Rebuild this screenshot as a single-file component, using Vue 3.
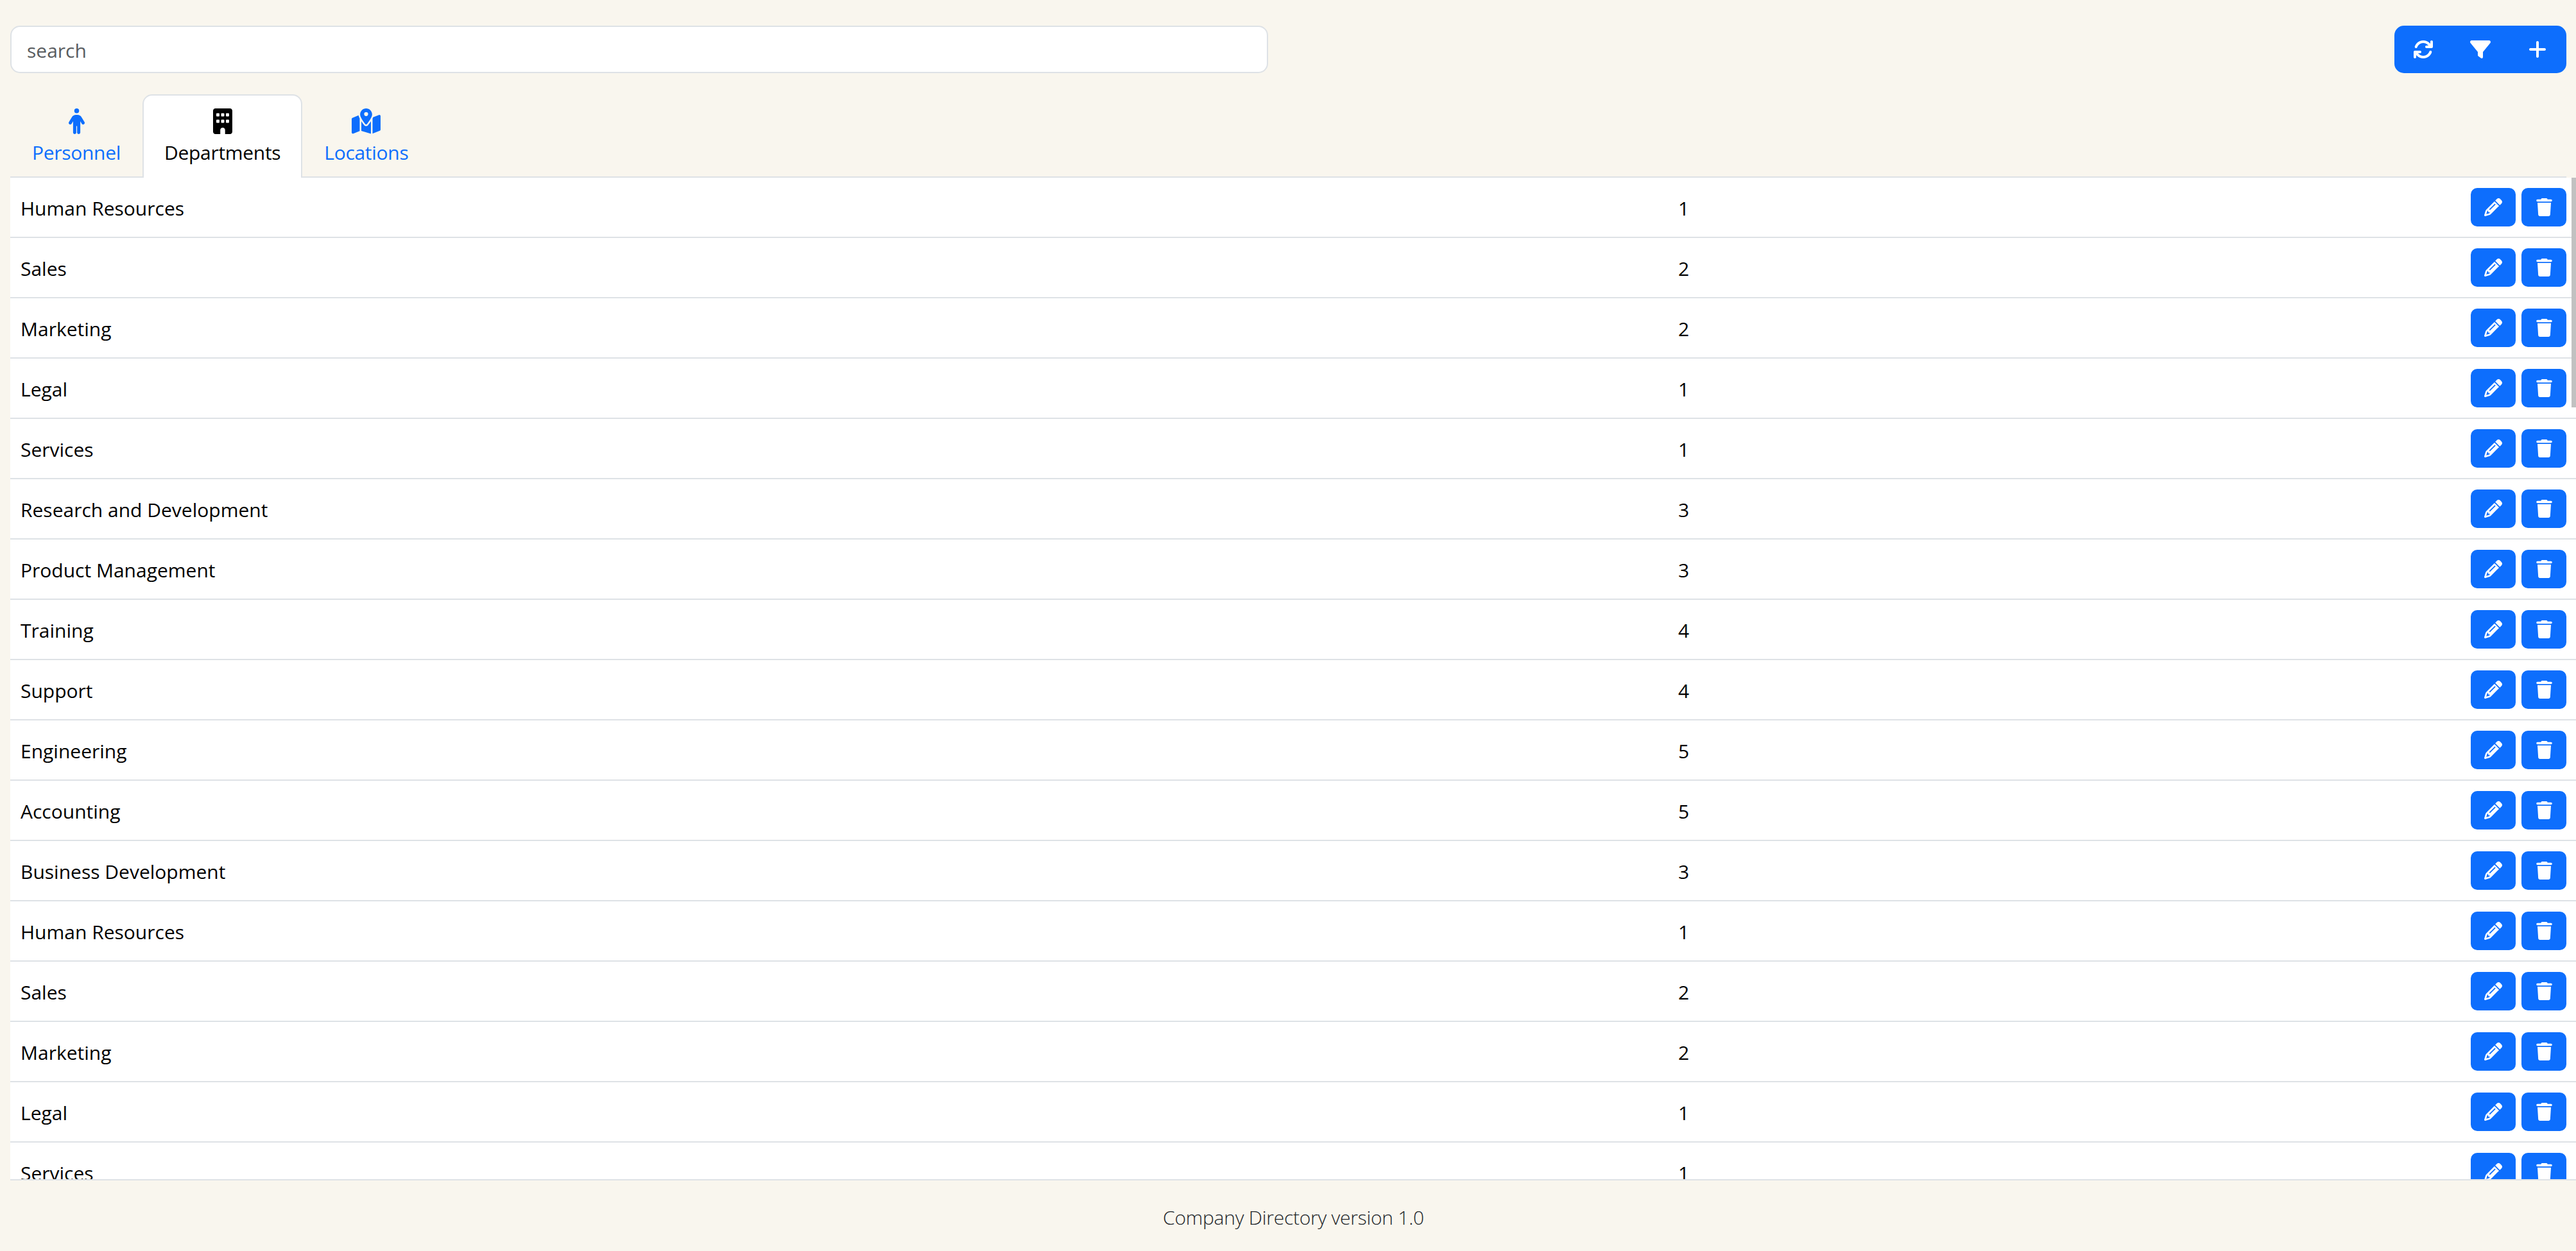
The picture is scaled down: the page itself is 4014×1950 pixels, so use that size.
<script setup>
const rows = [
  ['Human Resources', 1], ['Sales', 2], ['Marketing', 2], ['Legal', 1], ['Services', 1],
  ['Research and Development', 3], ['Product Management', 3], ['Training', 4], ['Support', 4],
  ['Engineering', 5], ['Accounting', 5], ['Business Development', 3],
  ['Human Resources', 1], ['Sales', 2], ['Marketing', 2], ['Legal', 1], ['Services', 1]
]
</script>

<template>
  <div class="page">
    <header class="top">
      <input class="search" type="text" placeholder="search" />
      <div class="group">
        <button class="gbtn" aria-label="Refresh">
          <svg class="gi" viewBox="0 0 512 512"><path d="M105.1 202.6c7.7-21.8 20.2-42.3 37.8-59.8c62.5-62.5 163.8-62.5 226.3 0L386.3 160H336c-17.7 0-32 14.3-32 32s14.3 32 32 32H463.5c0 0 0 0 0 0h.4c17.7 0 32-14.3 32-32V64c0-17.7-14.3-32-32-32s-32 14.3-32 32v51.2L414.4 97.6c-87.5-87.5-229.3-87.5-316.8 0C73.2 122 55.6 150.7 44.8 181.4c-5.9 16.7 2.9 34.9 19.5 40.8s34.9-2.9 40.8-19.5zM39 289.3c-5 1.5-9.8 4.2-13.7 8.2c-4 4-6.7 8.8-8.1 14c-.3 1.2-.6 2.5-.8 3.8c-.3 1.7-.4 3.4-.4 5.1V448c0 17.7 14.3 32 32 32s32-14.3 32-32V396.9l17.6 17.5 0 0c87.5 87.4 229.3 87.4 316.7 0c24.4-24.4 42.1-53.1 52.9-83.7c5.9-16.7-2.9-34.9-19.5-40.8s-34.9 2.9-40.8 19.5c-7.7 21.8-20.2 42.3-37.8 59.8c-62.5 62.5-163.8 62.5-226.3 0l-.1-.1L125.6 352H176c17.7 0 32-14.3 32-32s-14.3-32-32-32H48.4c-1.6 0-3.2 .1-4.8 .3s-3.1 .5-4.6 1z"/></svg>
        </button>
        <button class="gbtn" aria-label="Filter">
          <svg class="gi" viewBox="0 0 512 512"><path d="M3.9 54.9C10.5 40.9 24.5 32 40 32H472c15.5 0 29.5 8.9 36.1 22.9s4.6 30.5-5.2 42.5L320 320.9V448c0 12.1-6.8 23.2-17.7 28.6s-23.8 4.3-33.5-3l-64-48c-8.1-6-12.8-15.5-12.8-25.6V320.9L9 97.3C-.7 85.4-2.8 68.8 3.9 54.9z"/></svg>
        </button>
        <button class="gbtn" aria-label="Add">
          <svg class="gi plus" viewBox="0 0 448 512"><path d="M256 80c0-17.7-14.3-32-32-32s-32 14.3-32 32V224H48c-17.7 0-32 14.3-32 32s14.3 32 32 32H192V432c0 17.7 14.3 32 32 32s32-14.3 32-32V288H400c17.7 0 32-14.3 32-32s-14.3-32-32-32H256V80z"/></svg>
        </button>
      </div>
    </header>

    <nav class="tabs">
      <a class="tab">
        <svg class="ti person" viewBox="0 0 320 512"><path d="M112 48a48 48 0 1 1 96 0 48 48 0 1 1 -96 0zm40 304V480c0 17.7-14.3 32-32 32s-32-14.3-32-32V256.9L59.4 304.5c-9.1 15.1-28.8 20-43.9 10.9s-20-28.8-10.9-43.9l58.3-97c17.4-28.9 48.6-46.6 82.3-46.6h29.7c33.7 0 64.9 17.7 82.3 46.6l58.3 97c9.1 15.1 4.2 34.8-10.9 43.9s-34.8 4.2-43.9-10.9L232 256.9V480c0 17.7-14.3 32-32 32s-32-14.3-32-32V352H152z"/></svg>
        <span>Personnel</span>
      </a>
      <a class="tab active">
        <svg class="ti building" viewBox="0 0 384 512"><path d="M48 0C21.5 0 0 21.5 0 48V464c0 26.5 21.5 48 48 48h96V432c0-26.5 21.5-48 48-48s48 21.5 48 48v80h96c26.5 0 48-21.5 48-48V48c0-26.5-21.5-48-48-48H48zM64 240c0-8.8 7.2-16 16-16h32c8.8 0 16 7.2 16 16v32c0 8.8-7.2 16-16 16H80c-8.8 0-16-7.2-16-16V240zm112-16h32c8.8 0 16 7.2 16 16v32c0 8.8-7.2 16-16 16H176c-8.8 0-16-7.2-16-16V240c0-8.8 7.2-16 16-16zm80 16c0-8.8 7.2-16 16-16h32c8.8 0 16 7.2 16 16v32c0 8.8-7.2 16-16 16H272c-8.8 0-16-7.2-16-16V240zM80 96h32c8.8 0 16 7.2 16 16v32c0 8.8-7.2 16-16 16H80c-8.8 0-16-7.2-16-16V112c0-8.8 7.2-16 16-16zm80 16c0-8.8 7.2-16 16-16h32c8.8 0 16 7.2 16 16v32c0 8.8-7.2 16-16 16H176c-8.8 0-16-7.2-16-16V112zM272 96h32c8.8 0 16 7.2 16 16v32c0 8.8-7.2 16-16 16H272c-8.8 0-16-7.2-16-16V112c0-8.8 7.2-16 16-16z"/></svg>
        <span>Departments</span>
      </a>
      <a class="tab">
        <svg class="ti map" viewBox="0 0 576 512"><path d="M408 120c0 54.6-73.1 151.9-105.2 192c-7.7 9.6-22 9.6-29.6 0C241.1 271.9 168 174.6 168 120C168 53.7 221.7 0 288 0s120 53.7 120 120zm8 80.4c3.5-6.9 6.7-13.8 9.6-20.6c.5-1.2 1-2.5 1.5-3.7l116-46.4C558.9 123.4 576 135 576 152V422.8c0 9.8-6 18.6-15.1 22.3L416 503V200.4zM137.6 138.3c2.4 14.1 7.2 28.3 12.8 41.5c2.9 6.8 6.1 13.7 9.6 20.6V451.8L32.9 502.7C17.1 509 0 497.4 0 480.4V209.6c0-9.8 6-18.6 15.1-22.3l122.6-49zM327.8 332c13.9-17.4 35.7-45.7 56.2-77V504.3L192 449.4V255c20.5 31.3 42.3 59.6 56.2 77c20.5 25.6 59.1 25.6 79.6 0zM288 152a40 40 0 1 0 0-80 40 40 0 1 0 0 80z"/></svg>
        <span>Locations</span>
      </a>
    </nav>

    <main class="panel">
      <div class="list">
        <div v-for="(row, i) in rows" :key="i" class="row">
          <div class="name">{{ row[0] }}</div>
          <div class="num">{{ row[1] }}</div>
          <div class="actions">
            <button class="abtn" aria-label="Edit">
              <svg class="pen" viewBox="0 0 512 512"><path d="M410.3 231l11.3-11.3-33.9-33.9-62.1-62.1L291.7 89.8l-11.3 11.3-22.6 22.6L58.6 322.9c-10.4 10.4-18 23.3-22.2 37.4L1 480.7c-2.5 8.4-.2 17.5 6.1 23.7s15.3 8.5 23.7 6.1l120.3-35.4c14.1-4.2 27-11.8 37.4-22.2L387.7 253.7 410.3 231zM160 399.4l-9.1 22.7c-4 3.1-8.5 5.4-13.3 6.9L59.4 452l23-78.1c1.4-4.9 3.8-9.4 6.9-13.3l22.7-9.1v32c0 8.8 7.2 16 16 16h32zM362.7 18.7L348.3 33.2 325.7 55.8 314.3 67.1l33.9 33.9 62.1 62.1 33.9 33.9 11.3-11.3 22.6-22.6 14.5-14.5c25-25 25-65.5 0-90.5L453.3 18.7c-25-25-65.5-25-90.5 0zm-47.4 168l-144 144c-6.2 6.2-16.4 6.2-22.6 0s-6.2-16.4 0-22.6l144-144c6.2-6.2 16.4-6.2 22.6 0s6.2 16.4 0 22.6z"/></svg>
            </button>
            <button class="abtn" aria-label="Delete">
              <svg class="bin" viewBox="0 0 448 512"><path d="M135.2 17.7L128 32H32C14.3 32 0 46.3 0 64S14.3 96 32 96H416c17.7 0 32-14.3 32-32s-14.3-32-32-32H320l-7.2-14.3C307.4 6.8 296.3 0 284.2 0H163.8c-12.1 0-23.2 6.8-28.6 17.7zM416 128H32L53.2 467c1.6 25.3 22.6 45 47.9 45H346.9c25.3 0 46.3-19.7 47.9-45L416 128z"/></svg>
            </button>
          </div>
        </div>
      </div>
      <div class="thumb"></div>
    </main>

    <footer class="foot">Company Directory version 1.0</footer>
  </div>
</template>

<style>
html, body { margin: 0; background: #f9f6ee; overflow: hidden; }
</style>

<style scoped>
.page {
  height: 1950px;
  box-sizing: border-box;
  display: flex;
  flex-direction: column;
  padding: 40px 15px 0 16px;
  background: #f9f6ee;
  font-family: "Open Sans", "Noto Sans", sans-serif;
  font-size: 30px;
  color: #000;
}
.top {
  display: flex;
  justify-content: space-between;
  height: 74px;
  margin-bottom: 33px;
}
.search {
  width: 1960px;
  box-sizing: border-box;
  height: 74px;
  padding: 2px 24px 0;
  border: 2px solid #dee2e6;
  border-radius: 15px;
  background: #fff;
  font: inherit;
  outline: none;
}
.search::placeholder { color: #595c5f; opacity: 1; }
.group {
  display: flex;
  width: 268px;
  border-radius: 15px;
  background: #0d6efd;
  overflow: hidden;
}
.gbtn {
  flex: 1;
  display: flex;
  align-items: center;
  justify-content: center;
  padding: 0;
  border: 0;
  background: transparent;
}
.gi { width: 32px; height: 32px; fill: #fff; }
.gi.plus { width: 28px; }
.tabs {
  display: flex;
  height: 130px;
  box-sizing: border-box;
  border-bottom: 2px solid #dee2e6;
}
.tab {
  box-sizing: border-box;
  height: 130px;
  padding: 20px 32px 0;
  display: flex;
  flex-direction: column;
  align-items: center;
  color: #0d6efd;
  line-height: 40px;
  letter-spacing: -0.3px;
  border: 2px solid transparent;
  border-bottom: 0;
  border-radius: 15px 15px 0 0;
}
.tab span { margin-top: 9px; }
.tab.active {
  background: #fff;
  color: #000;
  border-color: #dee2e6;
}
.ti { height: 40px; fill: currentColor; }
.person { width: 25px; }
.building { width: 30px; }
.map { width: 45px; }
.panel {
  position: relative;
  flex: 1;
  min-height: 0;
  margin-right: -15px;
  overflow: hidden;
  border-bottom: 2px solid #dee2e6;
}
.list { background: #fff; }
.row {
  display: flex;
  align-items: center;
  box-sizing: border-box;
  height: 94px;
  padding: 0 15px 0 16px;
  border-bottom: 2px solid #dee2e6;
}
.name { width: 2583px; padding-top: 2px; }
.num { flex: 1; padding-top: 2px; }
.actions { display: flex; gap: 9px; }
.abtn {
  width: 70px;
  height: 60px;
  padding: 0;
  display: flex;
  align-items: center;
  justify-content: center;
  border: 0;
  border-radius: 10px;
  background: #0d6efd;
}
.pen { width: 28px; height: 28px; fill: #fff; }
.bin { width: 25px; height: 28px; fill: #fff; }
.thumb {
  position: absolute;
  top: 0;
  right: 0;
  width: 7px;
  height: 358px;
  background: #c1c1c1;
}
.foot {
  height: 110px;
  box-sizing: border-box;
  padding: 4px 0 0 16px;
  display: flex;
  align-items: center;
  justify-content: center;
  font-weight: 300;
  letter-spacing: -0.25px;
  color: #212529;
}
</style>
